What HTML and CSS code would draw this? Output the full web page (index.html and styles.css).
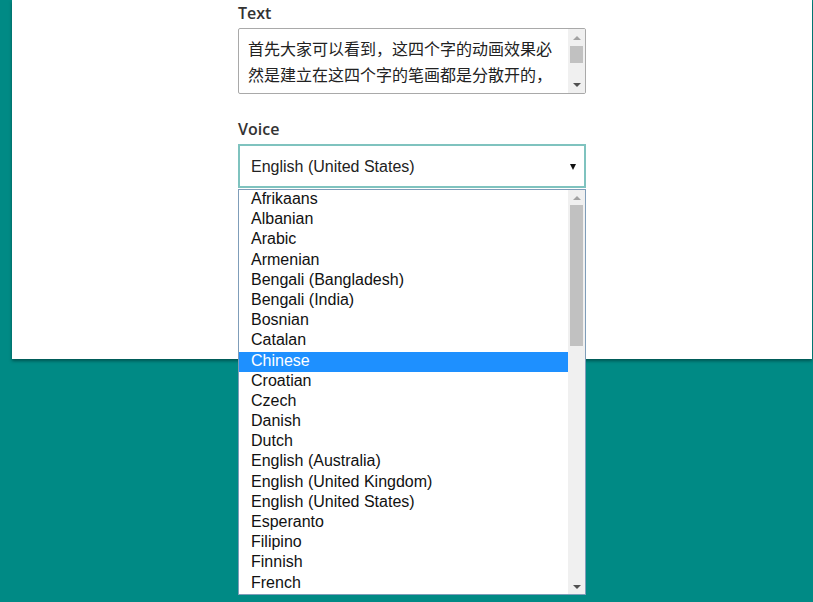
FILE: index.html
```html
<!DOCTYPE html>
<html>
<head>
<meta charset="utf-8">
<link rel="stylesheet" href="styles.css">
</head>
<body>
<div class="card">
  <div class="form">
    <label class="label">Text</label>
    <div class="textarea">
      <div class="ta-text">首先大家可以看到，这四个字的动画效果必然是建立在这四个字的笔画都是分散开的，所以我们需要先把握字形式，一笔一划</div>
      <div class="sb ta-sb">
        <div class="arr up"></div>
        <div class="thumb ta-thumb"></div>
        <div class="arr down"></div>
      </div>
    </div>
    <label class="label voice">Voice</label>
    <div class="field">
      <div class="select">
        <span>English (United States)</span>
        <span class="caret"></span>
      </div>
      <div class="list">
        <ul class="items">
          <li>Afrikaans</li>
          <li>Albanian</li>
          <li>Arabic</li>
          <li>Armenian</li>
          <li>Bengali (Bangladesh)</li>
          <li>Bengali (India)</li>
          <li>Bosnian</li>
          <li>Catalan</li>
          <li class="sel">Chinese</li>
          <li>Croatian</li>
          <li>Czech</li>
          <li>Danish</li>
          <li>Dutch</li>
          <li>English (Australia)</li>
          <li>English (United Kingdom)</li>
          <li>English (United States)</li>
          <li>Esperanto</li>
          <li>Filipino</li>
          <li>Finnish</li>
          <li>French</li>
        </ul>
        <div class="sb list-sb">
          <div class="arr up"></div>
          <div class="thumb list-thumb"></div>
          <div class="spacer"></div>
          <div class="arr down"></div>
        </div>
      </div>
    </div>
  </div>
</div>
</body>
</html>
```

FILE: styles.css
```css
html, body {
  margin: 0;
  padding: 0;
}
body {
  background: #008a85;
  width: 813px;
  height: 602px;
  overflow: hidden;
}
.card {
  margin-left: 12px;
  width: 800px;
  height: 359px;
  background: #fff;
  box-shadow: 0 2px 3px rgba(0, 40, 38, 0.55);
  box-sizing: border-box;
  padding: 2px 0 0 226px;
}
.form {
  width: 348px;
  display: flex;
  flex-direction: column;
}
.label {
  font-family: "Open Sans", sans-serif;
  font-size: 16px;
  font-weight: 600;
  line-height: 22px;
  color: #333;
  margin-bottom: 4px;
}
.voice {
  margin-top: 24px;
}
.textarea {
  height: 66px;
  border: 1px solid #a9a9a9;
  border-radius: 2px;
  box-sizing: border-box;
  display: flex;
  overflow: hidden;
}
.ta-text {
  flex: 1;
  padding: 6px 14px 0 9px;
  font-family: "Noto Sans CJK SC", sans-serif;
  font-size: 16px;
  line-height: 26px;
  color: #222;
  height: 100px;
}
.sb {
  width: 17px;
  background: #f0f0f0;
  display: flex;
  flex-direction: column;
  align-items: center;
  flex-shrink: 0;
}
.arr {
  width: 0;
  height: 0;
  border-left: 4px solid transparent;
  border-right: 4px solid transparent;
}
.arr.up {
  border-bottom: 4px solid #a3a3a3;
  margin-top: 7px;
}
.arr.down {
  border-top: 4px solid #505050;
  margin-top: auto;
  margin-bottom: 6px;
}
.thumb {
  width: 13px;
  background: #c1c1c1;
}
.ta-thumb {
  height: 17px;
  margin-top: 6px;
}
.field {
  position: relative;
}
.select {
  height: 44px;
  border: 2px solid #7fc3bf;
  box-sizing: border-box;
  display: flex;
  align-items: center;
  padding: 1px 8px 0 11px;
  font-family: "Liberation Sans", Arial, sans-serif;
  font-size: 16px;
  color: #222;
}
.caret {
  margin-left: auto;
  width: 0;
  height: 0;
  border-left: 3px solid transparent;
  border-right: 3px solid transparent;
  border-top: 6px solid #111;
}
.list {
  position: absolute;
  left: 0;
  top: 45px;
  width: 348px;
  height: 406px;
  border: 1px solid #7f9db9;
  box-sizing: border-box;
  background: #fff;
  display: flex;
}
.items {
  list-style: none;
  margin: 0;
  padding: 0;
  flex: 1;
  font-family: "Liberation Sans", Arial, sans-serif;
  font-size: 16px;
  color: #111;
  overflow: hidden;
}
.items li {
  height: 20.2px;
  line-height: 18px;
  padding-left: 12px;
}
.items li.sel {
  background: #1e90ff;
  color: #fff;
}
.list-sb {
  height: 100%;
}
.list-sb .arr.up {
  margin-top: 6px;
}
.list-thumb {
  height: 141px;
  margin-top: 5px;
}
.list-sb .arr.down {
  margin-bottom: 5px;
}
```
